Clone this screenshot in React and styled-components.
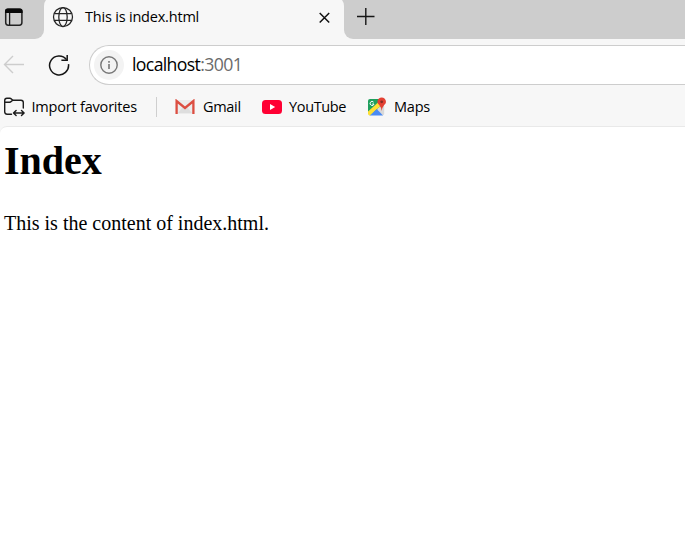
import React from "react";
import styled, { createGlobalStyle } from "styled-components";

const GlobalStyle = createGlobalStyle`
  * { box-sizing: border-box; }
  body { margin: 0; background: #fff; overflow: hidden; }
`;

const Browser = styled.div`
  width: 100%;
  height: 554px;
  overflow: hidden;
  display: flex;
  flex-direction: column;
  background: #f7f7f7;
  font-family: "Open Sans", "Noto Sans", sans-serif;
  color: #000;
`;

const TabStrip = styled.div`
  height: 39px;
  flex: none;
  display: flex;
  overflow: hidden;
`;

const TabActions = styled.div`
  width: 44px;
  background: #cdcdcd;
  border-bottom-right-radius: 9px;
  padding: 8px 0 0 4px;
`;

const TabSlot = styled.div`
  width: 300px;
  background: linear-gradient(#cdcdcd 50%, #f7f7f7 50%);
`;

const Tab = styled.div`
  height: 43px;
  margin-top: -4px;
  padding: 4px 13px 5px 8px;
  display: flex;
  align-items: center;
  background: #f7f7f7;
  border-radius: 10px 10px 0 0;
`;

const TabTitle = styled.span`
  flex: 1;
  margin-left: 11px;
  font-size: 14.5px;
  line-height: 20px;
  letter-spacing: -0.2px;
  white-space: nowrap;
`;

const StripRest = styled.div`
  flex: 1;
  background: #cdcdcd;
  border-bottom-left-radius: 9px;
  padding: 7px 0 0 12px;
`;

const Toolbar = styled.div`
  height: 46px;
  flex: none;
  display: flex;
  align-items: flex-start;
  padding-top: 6px;
`;

const NavButton = styled.div`
  width: ${(p) => p.$width}px;
  height: 40px;
  padding-left: ${(p) => p.$inset}px;
  display: flex;
  align-items: center;
`;

const AddressBar = styled.div`
  flex: 1;
  height: 40px;
  display: flex;
  align-items: center;
  padding-left: 4px;
  background: #fff;
  border: 1px solid #cdcdcd;
  border-right: 0;
  border-radius: 20px 0 0 20px;
`;

const SiteInfo = styled.div`
  width: 30px;
  height: 30px;
  border-radius: 50%;
  background: #f3f3f3;
  display: grid;
  place-items: center;
`;

const Address = styled.span`
  margin: 0 0 2px 8px;
  font-size: 17.7px;
  line-height: 24px;
  letter-spacing: -0.65px;
  color: #000;
`;

const Port = styled.span`
  color: #6b6b6b;
`;

const FavoritesBar = styled.div`
  height: 41px;
  flex: none;
  display: flex;
  align-items: center;
  padding: 3px 0 0 3px;
`;

const Favorite = styled.div`
  width: ${(p) => p.$width}px;
  display: flex;
  align-items: center;
  gap: ${(p) => p.$gap}px;
  font-size: 14.5px;
  line-height: 20px;
  letter-spacing: ${(p) => p.$spacing}px;
  white-space: nowrap;
`;

const Separator = styled.div`
  width: 1px;
  height: 20px;
  margin-right: 18px;
  background: #cfcfcf;
`;

const Page = styled.main`
  flex: 1;
  padding: 11px 4px;
  background: #fff;
  border-top: 1px solid #e9e9e9;
  border-top-left-radius: 7px;
  font-family: "Liberation Serif", "Times New Roman", serif;
  color: #000;
`;

const Heading = styled.h1`
  margin: 0;
  font-size: 40px;
  line-height: 46px;
`;

const Paragraph = styled.p`
  margin: 28px 0 0;
  font-size: 20px;
  line-height: 22px;
`;

const TabActionsIcon = () => (
  <svg width="19" height="19" viewBox="0 0 19 19" fill="none" stroke="#171717">
    <rect x="1.7" y="1.2" width="16.2" height="16" rx="2.6" stroke="#222" strokeWidth="1.5" />
    <path d="M1 5V3Q1 .5 3.5 .5H16Q18.6 .5 18.6 3V5Z" fill="#080808" stroke="none" />
    <path d="M5.6 5V17" strokeWidth="1.3" />
  </svg>
);

const GlobeIcon = () => (
  <svg width="22" height="22" viewBox="0 0 22 22" fill="none" stroke="#252525" strokeWidth="1.25">
    <circle cx="11" cy="11" r="9.5" />
    <ellipse cx="11" cy="11" rx="4.2" ry="9.5" />
    <path d="M2.2 7.7H19.8M2.2 14.3H19.8" />
  </svg>
);

const CloseIcon = () => (
  <svg width="13" height="13" viewBox="0 0 13 13" stroke="#111" strokeWidth="1.5">
    <path d="M1.7 2L11.2 11.5M11.2 2L1.7 11.5" />
  </svg>
);

const PlusIcon = () => (
  <svg width="20" height="20" viewBox="0 0 20 20" stroke="#161616" strokeWidth="1.4">
    <path d="M1 9.5H18.5M9.8 1V18" />
  </svg>
);

const BackIcon = () => (
  <svg width="22" height="20" viewBox="0 0 22 20" fill="none" stroke="#cdcdcd" strokeWidth="1.4">
    <path d="M21 9.5H1.7M10 1L1.5 9.5L10 18" />
  </svg>
);

const RefreshIcon = () => (
  <svg width="22" height="22" viewBox="0 0 22 22" fill="none" stroke="#151515" strokeWidth="1.5">
    <path d="M18.6 5.6A9.5 9.5 0 1 0 20.5 10.2" />
    <path d="M19.2 1V6.2H13.4" />
  </svg>
);

const InfoIcon = () => (
  <svg width="18" height="18" viewBox="0 0 18 18" fill="none" stroke="#777" strokeWidth="1.4">
    <circle cx="9" cy="9" r="8.2" />
    <path d="M9 8V13M9 5V6.7" strokeWidth="1.6" />
  </svg>
);

const ImportIcon = () => (
  <svg width="22" height="20" viewBox="0 0 22 20" fill="none" stroke="#1c1c1c" strokeWidth="1.4" strokeLinejoin="round" strokeLinecap="round">
    <path d="M8.5 17.2H4.1Q1.7 17.2 1.7 14.8V3.4Q1.7 1.2 3.9 1.2H6.8Q7.7 1.2 8.4 1.9L9.7 3.2H18Q20.3 3.2 20.3 5.5V11" />
    <path d="M2 5.3H6.6Q7.5 5.3 8.2 4.6L9.7 3.2" />
    <path d="M11 16H20.6M13.1 13.4L10.5 16L13.1 18.6M18.5 13.4L21.1 16L18.5 18.6" />
  </svg>
);

const GmailIcon = () => (
  <svg width="20" height="16" viewBox="0 0 20 16">
    <rect x="1" y="1" width="18" height="14" rx="1" fill="#ececec" />
    <path d="M3 14L8 8H12L17 14Z" fill="#dedede" />
    <path d="M1.6 15V2L10 9L18.4 2V15" fill="none" stroke="#dc4e41" strokeWidth="2.3" />
  </svg>
);

const YouTubeIcon = () => (
  <svg width="20" height="14" viewBox="0 0 20 14">
    <rect width="20" height="14" rx="3.5" fill="#ff0033" />
    <path d="M8 4L13.2 7L8 10Z" fill="#fff" />
  </svg>
);

const MapsIcon = () => (
  <svg width="20" height="20" viewBox="0 0 20 20">
    <path d="M3 2H13L15 9L3 18.5L1 16.5V4Q1 2 3 2Z" fill="#1f9f5d" />
    <path d="M15 8L17.2 9V16.5Q17.2 18.5 15.2 18.5L10 12Z" fill="#d9d9d9" />
    <path d="M1 14.5L11 5.5L14 8.5L3 18.5Q1 18.5 1 16.5Z" fill="#ffdf35" />
    <path d="M3 18.5L9.8 12L16 18.5Z" fill="#4a8af4" />
    <path d="M6.6 5.2A2 2 0 1 0 7 7H5.2" fill="none" stroke="#fff" strokeWidth="1" />
    <path d="M14.7 14Q14.4 10.5 12.2 8Q10.4 6.2 10.4 4.9A4.3 4.3 0 0 1 19 4.9Q19 6.2 17.2 8Q15 10.5 14.7 14Z" fill="#e34133" />
    <circle cx="14.7" cy="4.8" r="1.4" fill="#852b24" />
  </svg>
);

export default function App() {
  return (
    <Browser>
      <GlobalStyle />
      <TabStrip>
        <TabActions><TabActionsIcon /></TabActions>
        <TabSlot>
          <Tab>
            <GlobeIcon />
            <TabTitle>This is index.html</TabTitle>
            <CloseIcon />
          </Tab>
        </TabSlot>
        <StripRest><PlusIcon /></StripRest>
      </TabStrip>
      <Toolbar>
        <NavButton $width={48} $inset={3}><BackIcon /></NavButton>
        <NavButton $width={41} $inset={0}><RefreshIcon /></NavButton>
        <AddressBar>
          <SiteInfo><InfoIcon /></SiteInfo>
          <Address>localhost<Port>:3001</Port></Address>
        </AddressBar>
      </Toolbar>
      <FavoritesBar>
        <Favorite $width={153} $gap={6.5} $spacing={-0.2}><ImportIcon />Import favorites</Favorite>
        <Separator />
        <Favorite $width={87} $gap={8} $spacing={-0.3}><GmailIcon />Gmail</Favorite>
        <Favorite $width={105} $gap={7} $spacing={-0.35}><YouTubeIcon />YouTube</Favorite>
        <Favorite $width={80} $gap={7} $spacing={-0.2}><MapsIcon />Maps</Favorite>
      </FavoritesBar>
      <Page>
        <Heading>Index</Heading>
        <Paragraph>This is the content of index.html.</Paragraph>
      </Page>
    </Browser>
  );
}
